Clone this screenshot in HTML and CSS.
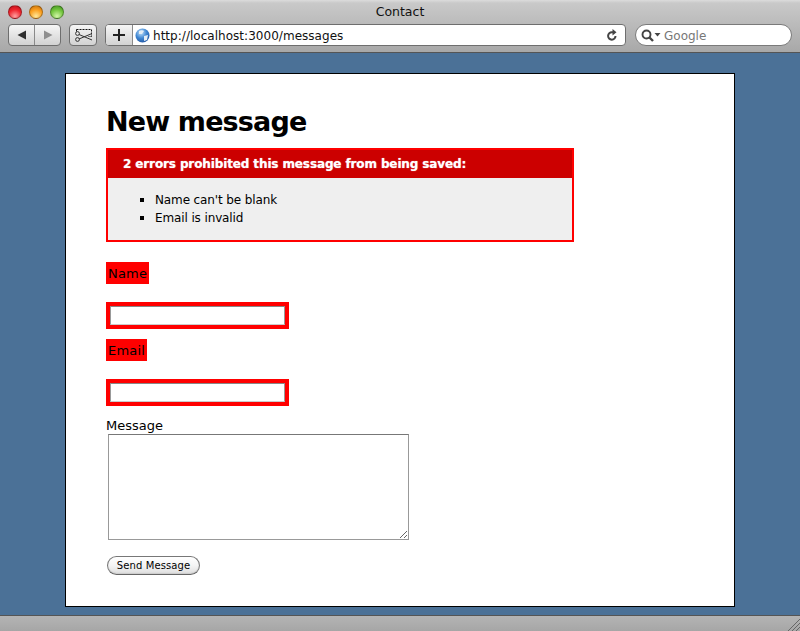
FILE: index.html
```html
<!DOCTYPE html>
<html lang="en">
<head>
<meta charset="utf-8">
<title>Contact</title>
<link rel="stylesheet" href="styles.css">
</head>
<body>
<header class="chrome">
  <div class="titlebar">
    <div class="lights">
      <span class="light light-red"></span>
      <span class="light light-amber"></span>
      <span class="light light-green"></span>
    </div>
    <div class="window-title">Contact</div>
  </div>
  <div class="toolbar">
    <div class="btn-group nav">
      <span class="tool-btn"><svg width="12" height="12" viewBox="0 0 12 12"><path d="M1.500 6 10 1.500v9z" fill="#2e2e2e"/></svg></span>
      <span class="tool-btn"><svg width="12" height="12" viewBox="0 0 12 12"><path d="M10.500 6 2 1.500v9z" fill="#8f8f8f"/></svg></span>
    </div>
    <div class="btn-group snip">
      <span class="tool-btn"><svg width="22" height="16" viewBox="0 0 22 16" fill="none" stroke="#111"><path d="M4.500 2.500h15v7h-3M4.500 2.500v2" stroke-dasharray="2 1"/><path d="M7 7.500 20 13M7 12 20 6.500" stroke="#333"/><circle cx="5.500" cy="6.500" r="1.900" stroke="#333"/><circle cx="5.500" cy="12.500" r="1.900" stroke="#333"/></svg></span>
    </div>
    <div class="address">
      <span class="add-btn"><svg width="12" height="12" viewBox="0 0 12 12"><path d="M5 0h2v5h5v2H7v5H5V7H0V5h5z" fill="#222"/></svg></span>
      <svg class="globe" width="15" height="15" viewBox="0 0 15 15"><defs><radialGradient id="g" cx=".4" cy=".3" r=".8"><stop offset="0" stop-color="#bfe0fa"/><stop offset=".5" stop-color="#3f86d2"/><stop offset="1" stop-color="#1c4f9c"/></radialGradient></defs><circle cx="7.500" cy="7.500" r="7" fill="url(#g)"/><path d="M4 3c2-1 4-1 5 0L7 6 4 6zM9 8l4-1-1 5-3 1z" fill="#e4edf5"/></svg>
      <span class="url">http://localhost:3000/messages</span>
      <svg class="reload" width="12" height="13" viewBox="0 0 12 13" fill="none"><path d="M9.500 7A3.700 3.700 0 1 1 6 3.300h1.500" stroke="#444" stroke-width="2"/><path d="M6.500 0v6.500L10.500 3.300z" fill="#444"/></svg>
    </div>
    <div class="search">
      <svg width="20" height="13" viewBox="0 0 20 13" fill="none"><circle cx="5.500" cy="5.500" r="4" stroke="#444" stroke-width="1.900"/><path d="m8.500 8.500 3.500 3.500" stroke="#444" stroke-width="2.400"/><path d="M13.500 4h6l-3 3.500z" fill="#444"/></svg>
      <span class="search-text">Google</span>
    </div>
  </div>
</header>

<main class="page">
  <div class="container">
    <h1 class="title">New message</h1>
    <form class="message-form">
      <div class="error-box">
        <h2 class="error-title">2 errors prohibited this message from being saved:</h2>
        <ul class="error-list">
          <li>Name can't be blank</li>
          <li>Email is invalid</li>
        </ul>
      </div>
      <div class="field">
        <label class="label-error" for="name">Name</label>
        <span class="input-error"><input id="name" class="text-input" type="text"></span>
      </div>
      <div class="field">
        <label class="label-error" for="email">Email</label>
        <span class="input-error"><input id="email" class="text-input" type="text"></span>
      </div>
      <div class="field-message">
        <label class="label-plain" for="message">Message</label>
        <textarea id="message" class="message-input"></textarea>
      </div>
      <button class="send" type="button">Send Message</button>
    </form>
  </div>
</main>

<footer class="statusbar">
  <svg class="grip" width="13" height="13" viewBox="0 0 13 13" stroke="#666" fill="none"><path d="M1 13 13 1M5 13l8-8M9 13l4-4"/></svg>
</footer>
</body>
</html>
```

FILE: styles.css
```css
* { box-sizing: border-box; }

html, body { margin: 0; height: 100%; }

body {
  display: flex;
  flex-direction: column;
  height: 631px;
  overflow: hidden;
  background: #4b7197;
  font-family: "DejaVu Sans", Verdana, sans-serif;
  font-size: 13px;
  color: #000;
}

.chrome {
  height: 53px;
  flex: none;
  background: linear-gradient(#dcdcdc 0, #c9c9c9 3px, #a8a8a8 100%);
  border-bottom: 1px solid #555;
}

.titlebar {
  height: 22px;
  display: flex;
  align-items: center;
  position: relative;
}

.lights {
  display: flex;
  gap: 7px;
  padding-left: 8px;
  padding-top: 2px;
}

.light {
  width: 14px;
  height: 14px;
  border-radius: 50%;
  border: 1px solid rgba(0, 0, 0, .3);
}

.light-red { background: radial-gradient(circle at 50% 85%, #ffa0a0, #f0262e 55%, #b8101a); }
.light-amber { background: radial-gradient(circle at 50% 85%, #ffe89a, #fb9f1e 55%, #c26c0a); }
.light-green { background: radial-gradient(circle at 50% 85%, #d2f7a8, #74c63e 55%, #3f9020); }

.window-title {
  position: absolute;
  left: 0;
  right: 0;
  top: 3px;
  text-align: center;
  font-size: 12.500px;
  line-height: 17px;
  color: #111;
}

.toolbar {
  display: flex;
  align-items: flex-start;
  padding: 2px 0 0 8px;
  height: 24px;
}

.btn-group {
  display: flex;
  height: 22px;
  border: 1px solid #6e6e6e;
  border-radius: 4px;
  background: linear-gradient(#f6f6f6, #d2d2d2);
  overflow: hidden;
}

.tool-btn {
  display: flex;
  align-items: center;
  justify-content: center;
  height: 100%;
}

.nav { width: 53px; }
.nav .tool-btn { flex: 1; }
.nav .tool-btn + .tool-btn { border-left: 1px solid #8a8a8a; }

.snip { width: 28px; margin-left: 8px; }
.snip .tool-btn { width: 100%; }

.address {
  width: 521px;
  height: 22px;
  margin-left: 8px;
  display: flex;
  align-items: center;
  border: 1px solid #6e6e6e;
  border-radius: 4px;
  background: #fff;
  overflow: hidden;
}

.add-btn {
  flex: none;
  width: 27px;
  height: 100%;
  display: flex;
  align-items: center;
  justify-content: center;
  background: linear-gradient(#f6f6f6, #d2d2d2);
  border-right: 1px solid #8a8a8a;
}

.globe { flex: none; margin-left: 2px; }

.url {
  flex: 1;
  margin-left: 3px;
  padding-top: 1px;
  font-size: 12px;
  letter-spacing: .03px;
  white-space: nowrap;
  color: #111;
}

.reload { flex: none; margin-right: 7px; }

.search {
  width: 157px;
  height: 22px;
  margin-left: 9px;
  display: flex;
  align-items: center;
  padding-left: 5px;
  border: 1px solid #7a7a7a;
  border-radius: 11px;
  background: #fff;
}

.search-text {
  margin-left: 3px;
  padding-top: 2px;
  font-size: 12px;
  color: #777;
}

.page {
  flex: 1;
  min-height: 0;
  padding-top: 20px;
}

.container {
  width: 670px;
  height: 534px;
  margin: 0 auto;
  padding: 30px 40px 0;
  background: #fff;
  border: 1px solid #000;
}

.title {
  margin: 0 0 8px;
  font-size: 27px;
  font-weight: bold;
  letter-spacing: -.85px;
  line-height: 36px;
}

.error-box {
  width: 468px;
  height: 94px;
  border: 2px solid #f00;
  background: #efefef;
}

.error-title {
  margin: 0;
  height: 28px;
  padding: 0 0 0 15px;
  background: #c00;
  color: #fff;
  font-size: 12px;
  font-weight: bold;
  letter-spacing: -.12px;
  line-height: 28px;
  text-shadow: 0 0 1px rgba(255, 255, 255, .7);
}

.error-list {
  margin: 0;
  padding: 12px 0 0 47px;
  list-style: square;
  font-size: 12px;
  letter-spacing: -.12px;
  line-height: 18px;
}

.error-list li { height: 18px; }
.error-list li::marker { font-size: 14px; }

.field { margin-top: 20px; }
.field + .field { margin-top: 10px; }

.label-error {
  display: table;
  padding: 2px 2px 0;
  background: #f00;
  font-size: 13px;
  letter-spacing: .2px;
  line-height: 20px;
}

.input-error {
  display: table;
  margin-top: 18px;
  padding: 4px;
  background: #f00;
}

.text-input {
  display: block;
  width: 175px;
  height: 19px;
  margin: 0;
  padding: 1px 2px;
  border: 1px solid #999;
  border-top-color: #888;
  border-bottom-color: #ccc;
  background: #fff;
  outline: none;
}

.field-message { margin-top: 11px; }

.label-plain {
  display: block;
  font-size: 13px;
  line-height: 17px;
}

.message-input {
  display: block;
  width: 301px;
  height: 106px;
  margin: 0 0 0 2px;
  padding: 2px;
  border: 1px solid #999;
  border-top-color: #777;
  background: #fff;
}

.send {
  display: block;
  width: 93px;
  height: 19px;
  margin: 16px 0 0 1px;
  padding: 0 0 1px;
  border: 1px solid #777;
  border-bottom-color: #666;
  border-radius: 10px;
  background: linear-gradient(#fff, #f4f4f4 50%, #dedede);
  box-shadow: inset 0 -1px 1px #ccc;
  font-family: "DejaVu Sans", Verdana, sans-serif;
  font-size: 10px;
  letter-spacing: .1px;
  color: #000;
}

.statusbar {
  height: 16px;
  flex: none;
  display: flex;
  justify-content: flex-end;
  align-items: flex-end;
  background: linear-gradient(#b4b4b4, #a6a6a6);
  border-top: 1px solid #555;
}

.grip { display: block; }
```
